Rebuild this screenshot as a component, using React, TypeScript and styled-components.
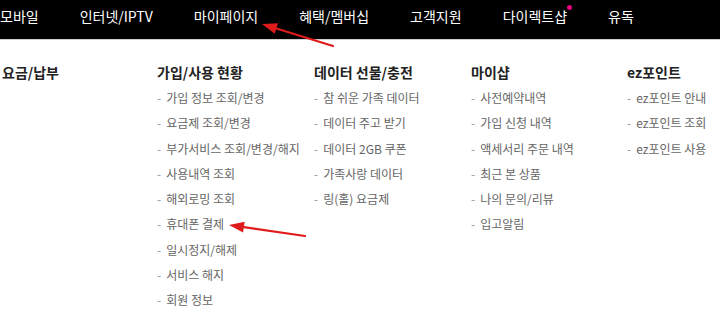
import React from "react";
import styled, { createGlobalStyle } from "styled-components";

const GlobalStyle = createGlobalStyle`
    html, body {
        margin: 0;
        padding: 0;
        background: #fff;
    }
    body {
        font-family: "Noto Sans CJK KR", "Noto Sans", sans-serif;
    }
`;

const navItems = ["모바일", "인터넷/IPTV", "마이페이지", "혜택/멤버십", "고객지원", "다이렉트샵", "유독"];

const columns = [
    { title: "요금/납부", items: [] as string[] },
    {
        title: "가입/사용 현황",
        items: [
            "가입 정보 조회/변경",
            "요금제 조회/변경",
            "부가서비스 조회/변경/해지",
            "사용내역 조회",
            "해외로밍 조회",
            "휴대폰 결제",
            "일시정지/해제",
            "서비스 해지",
            "회원 정보",
        ],
    },
    {
        title: "데이터 선물/충전",
        items: ["참 쉬운 가족 데이터", "데이터 주고 받기", "데이터 2GB 쿠폰", "가족사랑 데이터", "링(홀) 요금제"],
    },
    {
        title: "마이샵",
        items: ["사전예약내역", "가입 신청 내역", "액세서리 주문 내역", "최근 본 상품", "나의 문의/리뷰", "입고알림"],
    },
    { title: "ez포인트", items: ["ez포인트 안내", "ez포인트 조회", "ez포인트 사용"] },
];

// red annotation arrow drawn over the page
function Arrow({ x1, y1, x2, y2 }: { x1: number; y1: number; x2: number; y2: number }) {
    const angle = Math.atan2(y2 - y1, x2 - x1);
    const len = 15;
    const half = 5.5;
    const bx = x2 - len * Math.cos(angle);
    const by = y2 - len * Math.sin(angle);
    const px = -Math.sin(angle) * half;
    const py = Math.cos(angle) * half;
    return (
        <g>
            <line x1={x1} y1={y1} x2={bx} y2={by} stroke="#e01b1b" strokeWidth={2.2} strokeLinecap="round" />
            <polygon points={`${x2},${y2} ${bx + px},${by + py} ${bx - px},${by - py}`} fill="#e01b1b" />
        </g>
    );
}

export default function App() {
    return (
        <Page>
            <GlobalStyle />
            <NavBar>
                {navItems.map((label) => (
                    <NavItem key={label}>
                        {label}
                        {label === "다이렉트샵" && <NewDot />}
                    </NavItem>
                ))}
            </NavBar>
            <MenuGrid>
                {columns.map((col) => (
                    <Column key={col.title}>
                        <ColumnTitle>{col.title}</ColumnTitle>
                        {col.items.map((item) => (
                            <MenuItem key={item}>
                                <Dash>-</Dash>
                                {item}
                            </MenuItem>
                        ))}
                    </Column>
                ))}
            </MenuGrid>
            <Annotations width="720" height="323" viewBox="0 0 720 323">
                <Arrow x1={333} y1={46} x2={262} y2={24} />
                <Arrow x1={305} y1={236} x2={229} y2={225} />
            </Annotations>
        </Page>
    );
}

const Page = styled.div`
    position: relative;
    width: 720px;
    height: 323px;
    overflow: hidden;
    background: #fff;
`;

const NavBar = styled.nav`
    display: flex;
    align-items: center;
    gap: 41px;
    height: 31px;
    padding-bottom: 8px;
    background: #000;
    border-bottom: 1px solid #cfcfcf;
`;

const NavItem = styled.span`
    position: relative;
    color: #fff;
    font-size: 14px;
    line-height: 20px;
    white-space: nowrap;
`;

const NewDot = styled.span`
    position: absolute;
    top: -1px;
    right: -5px;
    width: 5px;
    height: 5px;
    border-radius: 50%;
    background: #e6007e;
`;

const MenuGrid = styled.div`
    display: grid;
    grid-template-columns: 155px 157px 157px 156px 1fr;
    padding: 20px 0 0 2px;
`;

const Column = styled.div`
    display: flex;
    flex-direction: column;
`;

const ColumnTitle = styled.div`
    color: #222;
    font-size: 14px;
    font-weight: 700;
    line-height: 24px;
    margin-bottom: 1px;
    white-space: nowrap;
`;

const MenuItem = styled.div`
    color: #666;
    font-size: 12px;
    line-height: 25.3px;
    white-space: nowrap;
`;

const Dash = styled.span`
    color: #999;
    margin-right: 5px;
`;

const Annotations = styled.svg`
    position: absolute;
    left: 0;
    top: 0;
    pointer-events: none;
`;
